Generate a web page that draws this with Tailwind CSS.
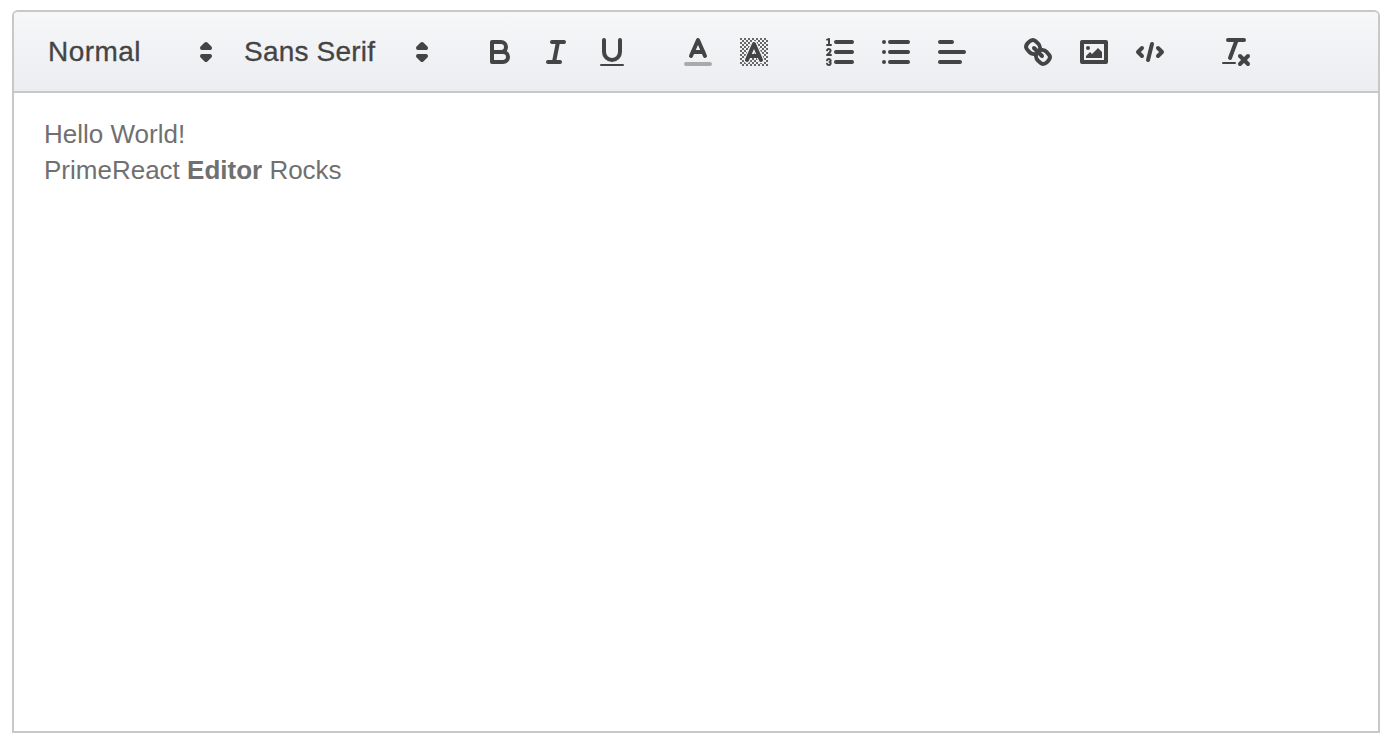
<!DOCTYPE html>
<html lang="en">
<head>
  <meta charset="UTF-8">
  <title>Editor</title>
  <script src="https://cdn.jsdelivr.net/npm/@tailwindcss/browser@4"></script>
</head>
<body class="bg-white font-['Liberation_Sans',Arial,sans-serif]">

  <div class="ml-[12px] mt-[10px] w-[1368px] h-[723px] flex flex-col border-2 border-[#c8c8c8] rounded-t-[6px]">

    <!-- Toolbar -->
    <div class="h-[81px] shrink-0 flex items-center pl-[18px] border-b-2 border-[#c8c8c8] rounded-t-[4px] bg-gradient-to-b from-[#f6f7f9] to-[#ebedf0] text-[#444]">

      <!-- Pickers -->
      <div class="w-[196px] h-[48px] flex items-center justify-between pl-[16px] pr-[4px] text-[28px] tracking-[0.45px] [-webkit-text-stroke:0.3px_#444]">
        <span>Normal</span>
        <svg class="w-[36px] h-[36px]" viewBox="0 0 18 18" fill="#444" stroke="#444" stroke-width="2" stroke-linejoin="round"><polygon points="7 11 9 13 11 11 7 11"/><polygon points="7 7 9 5 11 7 7 7"/></svg>
      </div>
      <div class="w-[214px] mr-[30px] h-[48px] flex items-center justify-between pl-[16px] pr-[2px] text-[28px] tracking-[0.2px] [-webkit-text-stroke:0.3px_#444]">
        <span>Sans Serif</span>
        <svg class="w-[36px] h-[36px]" viewBox="0 0 18 18" fill="#444" stroke="#444" stroke-width="2" stroke-linejoin="round"><polygon points="7 11 9 13 11 11 7 11"/><polygon points="7 7 9 5 11 7 7 7"/></svg>
      </div>

      <!-- Bold, italic, underline -->
      <div class="flex mr-[30px]">
        <button class="w-[56px] h-[48px] flex items-center justify-center">
          <svg class="w-[36px] h-[36px]" viewBox="0 0 18 18" fill="none" stroke="#444" stroke-width="2" stroke-linecap="round" stroke-linejoin="round"><path d="M5,4H9.5A2.5,2.5,0,0,1,12,6.5v0A2.5,2.5,0,0,1,9.5,9H5V4Z"/><path d="M5,9h5.5A2.5,2.5,0,0,1,13,11.5v0A2.5,2.5,0,0,1,10.5,14H5V9Z"/></svg>
        </button>
        <button class="w-[56px] h-[48px] flex items-center justify-center">
          <svg class="w-[36px] h-[36px]" viewBox="0 0 18 18" fill="none" stroke="#444" stroke-width="2" stroke-linecap="round"><line x1="7" x2="13" y1="4" y2="4"/><line x1="5" x2="11" y1="14" y2="14"/><line x1="8" x2="10" y1="14" y2="4"/></svg>
        </button>
        <button class="w-[56px] h-[48px] flex items-center justify-center">
          <svg class="w-[36px] h-[36px]" viewBox="0 0 18 18" fill="none" stroke="#444" stroke-width="2" stroke-linecap="round"><path d="M5,3V9a4.012,4.012,0,0,0,4,4H9a4.012,4.012,0,0,0,4-4V3"/><rect fill="#444" stroke="none" height="1" rx="0.5" ry="0.5" width="12" x="3" y="15"/></svg>
        </button>
      </div>

      <!-- Color, background -->
      <div class="flex mr-[30px]">
        <button class="w-[56px] h-[48px] flex items-center justify-center">
          <svg class="w-[36px] h-[36px]" viewBox="0 0 18 18" fill="none" stroke="#444" stroke-width="2" stroke-linecap="round" stroke-linejoin="round"><line stroke="#aaa" x1="3" x2="15" y1="15" y2="15"/><polyline points="5.5 11 9 3 12.5 11"/><line x1="11.63" x2="6.38" y1="9" y2="9"/></svg>
        </button>
        <button class="w-[56px] h-[48px] flex items-center justify-center">
          <svg class="w-[36px] h-[36px]" viewBox="0 0 18 18" fill="none" stroke="#444" stroke-width="2" stroke-linecap="round" stroke-linejoin="round">
            <defs><pattern id="checker" x="0" y="0" width="2" height="2" patternUnits="userSpaceOnUse"><rect width="1" height="1" fill="#444" fill-opacity="0.8" stroke="none"/><rect x="1" y="1" width="1" height="1" fill="#444" fill-opacity="0.8" stroke="none"/></pattern></defs>
            <rect x="2" y="2" width="14" height="14" fill="url(#checker)" stroke="none"/>
            <polyline stroke="#f0f1f4" stroke-width="3.2" points="5.5 13 9 5 12.5 13"/>
            <polyline points="5.5 13 9 5 12.5 13"/><line x1="11.63" x2="6.38" y1="11" y2="11"/>
          </svg>
        </button>
      </div>

      <!-- Lists, align -->
      <div class="flex mr-[30px]">
        <button class="w-[56px] h-[48px] flex items-center justify-center">
          <svg class="w-[36px] h-[36px]" viewBox="0 0 18 18" fill="none" stroke="#444" stroke-width="2" stroke-linecap="round" stroke-linejoin="round"><line x1="7" x2="15" y1="4" y2="4"/><line x1="7" x2="15" y1="9" y2="9"/><line x1="7" x2="15" y1="14" y2="14"/><line stroke-width="1" x1="2.5" x2="4.5" y1="5.5" y2="5.5"/><path fill="#444" stroke="none" d="M3.5,6A0.5,0.5,0,0,1,3,5.5V3.085l-0.276.138A0.5,0.5,0,0,1,2.053,3c-0.124-.247-0.023-0.324.224-0.447l1-.5A0.5,0.5,0,0,1,4,2.5v3A0.5,0.5,0,0,1,3.5,6Z"/><path stroke-width="1" d="M4.5,10.5h-2c0-.234,1.85-1.076,1.85-2.234A0.959,0.959,0,0,0,2.5,8.156"/><path stroke-width="1" d="M2.5,14.846a0.959,0.959,0,0,0,1.85-.109A0.7,0.7,0,0,0,3.75,14a0.688,0.688,0,0,0,.6-0.736,0.959,0.959,0,0,0-1.85-.109"/></svg>
        </button>
        <button class="w-[56px] h-[48px] flex items-center justify-center">
          <svg class="w-[36px] h-[36px]" viewBox="0 0 18 18" fill="none" stroke="#444" stroke-width="2" stroke-linecap="round"><line x1="6" x2="15" y1="4" y2="4"/><line x1="6" x2="15" y1="9" y2="9"/><line x1="6" x2="15" y1="14" y2="14"/><line x1="3" x2="3" y1="4" y2="4"/><line x1="3" x2="3" y1="9" y2="9"/><line x1="3" x2="3" y1="14" y2="14"/></svg>
        </button>
        <button class="w-[56px] h-[48px] flex items-center justify-center">
          <svg class="w-[36px] h-[36px]" viewBox="0 0 18 18" fill="none" stroke="#444" stroke-width="2" stroke-linecap="round"><line x1="3" x2="15" y1="9" y2="9"/><line x1="3" x2="13" y1="14" y2="14"/><line x1="3" x2="9" y1="4" y2="4"/></svg>
        </button>
      </div>

      <!-- Link, image, code -->
      <div class="flex mr-[30px]">
        <button class="w-[56px] h-[48px] flex items-center justify-center">
          <svg class="w-[36px] h-[36px]" viewBox="0 0 18 18" fill="none" stroke="#444" stroke-width="2" stroke-linecap="round" stroke-linejoin="round"><line x1="7" x2="11" y1="7" y2="11"/><path d="M8.9,4.577a3.476,3.476,0,0,1,.36,4.679A3.476,3.476,0,0,1,4.577,8.9C3.185,7.5,2.035,6.4,4.217,4.217S7.5,3.185,8.9,4.577Z"/><path d="M13.423,9.1a3.476,3.476,0,0,0-4.679-.36,3.476,3.476,0,0,0,.36,4.679c1.392,1.392,2.5,2.542,4.679.36S14.815,10.5,13.423,9.1Z"/></svg>
        </button>
        <button class="w-[56px] h-[48px] flex items-center justify-center">
          <svg class="w-[36px] h-[36px]" viewBox="0 0 18 18" fill="none" stroke="#444" stroke-width="2" stroke-linecap="round" stroke-linejoin="round"><rect height="10" width="12" x="3" y="4"/><circle fill="#444" stroke="none" cx="6" cy="7" r="1"/><polyline fill="#444" stroke="none" points="5 12 5 11 7 9 8 10 11 7 13 9 13 12 5 12"/></svg>
        </button>
        <button class="w-[56px] h-[48px] flex items-center justify-center">
          <svg class="w-[36px] h-[36px]" viewBox="0 0 18 18" fill="none" stroke="#444" stroke-width="2" stroke-linecap="round" stroke-linejoin="round"><polyline points="5 7 3 9 5 11"/><polyline points="13 7 15 9 13 11"/><line x1="10" x2="8" y1="5" y2="13"/></svg>
        </button>
      </div>

      <!-- Clean -->
      <button class="w-[56px] h-[48px] flex items-center justify-center">
        <svg class="w-[36px] h-[36px]" viewBox="0 0 18 18" fill="none" stroke="#444" stroke-width="2" stroke-linecap="round"><line x1="5" x2="13" y1="3" y2="3"/><line x1="6" x2="9.35" y1="12" y2="3"/><line x1="11" x2="15" y1="11" y2="15"/><line x1="15" x2="11" y1="11" y2="15"/><rect fill="#444" stroke="none" height="1" rx="0.5" ry="0.5" width="7" x="2" y="14"/></svg>
      </button>
    </div>

    <!-- Content -->
    <div class="flex-1 px-[30px] pt-[23px] text-[26px] leading-[36px] text-[#707070]">
      <p>Hello World!</p>
      <p>PrimeReact <strong class="font-bold">Editor</strong> Rocks</p>
    </div>
  </div>

</body>
</html>
